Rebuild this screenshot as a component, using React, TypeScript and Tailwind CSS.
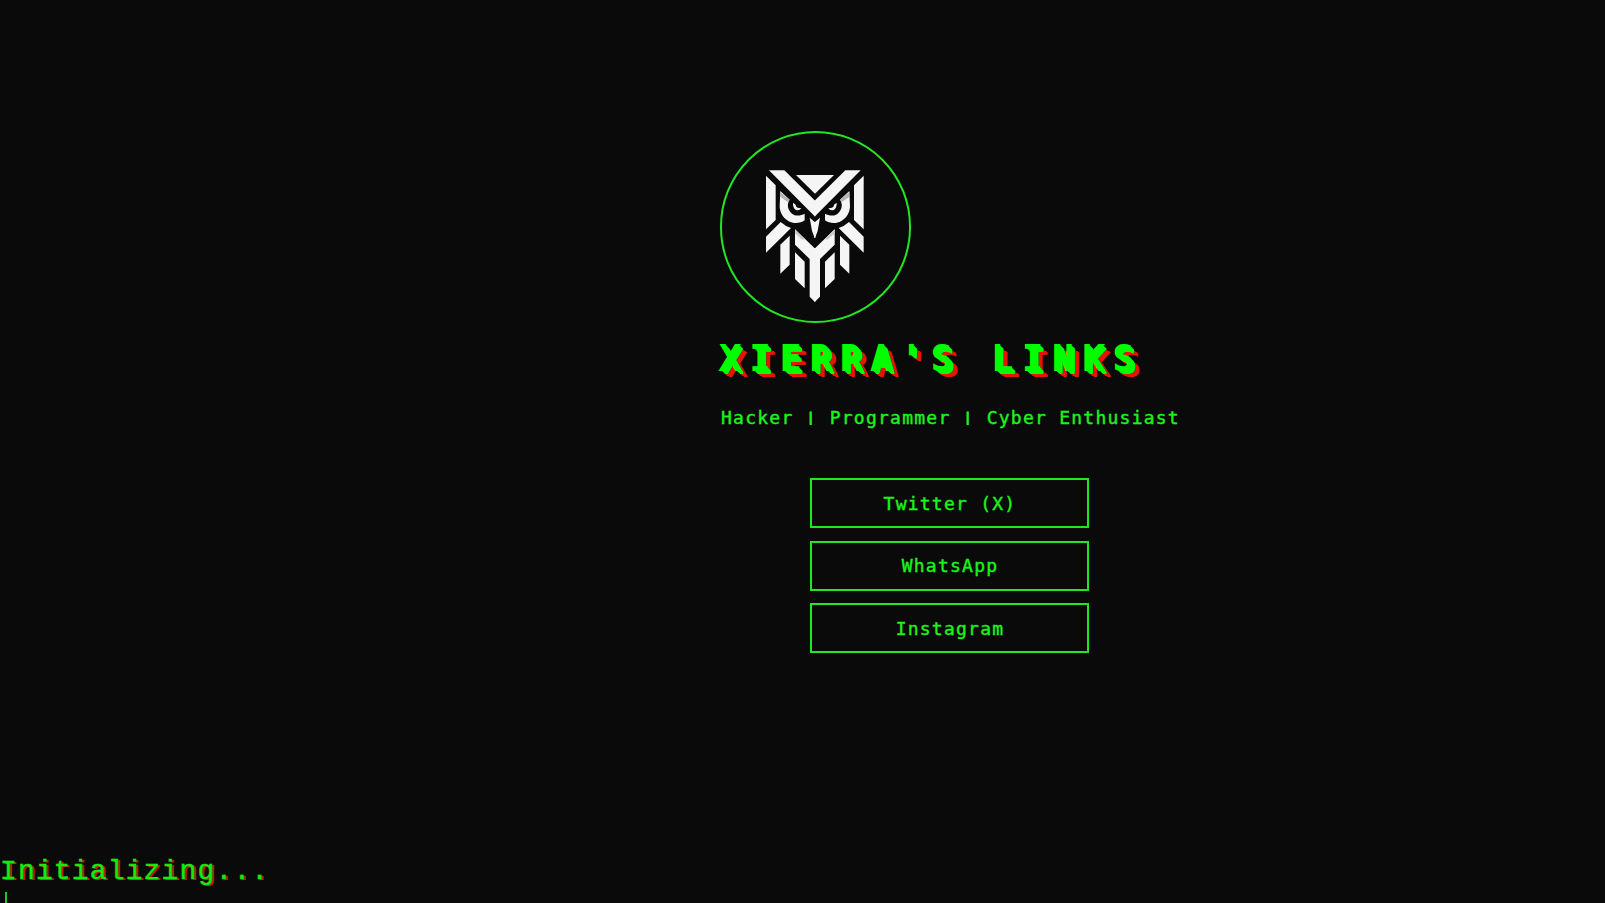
const links = ["Twitter (X)", "WhatsApp", "Instagram"];

function Owl() {
  const side = (
    <g>
      <path d="M177 151H223L316 243V289L314 289Z" />
      <path d="M168 167L197 196V300L168 328Z" />
      <path d="M211 213L239 239C229 253 234 270 246 281C257 290 274 286 284 281V301C271 311 250 312 235 303C217 292 209 275 209 258Z" />
      <path d="M211 216L239 239L233 246L211 230Z" fill="#b5b5b5" />
      <path d="M249 248L257 254Q257 263 268 264L274 265Q268 273 258 270Q248 264 249 248Z" />
      <path d="M168 350L212 306Q225 318 243 324L168 398Z" />
      <path d="M211 374L239 347V434L211 461Z" />
      <path d="M255 328L314 385H316V545H314L299 530V417L255 374Z" />
      <path d="M255 328L284 357L276 359L255 340Z" fill="#c9c9c9" />
      <path d="M255 397L284 425V505L255 477Z" />
      <path d="M299 293L314 306H316V354H314L306 333Z" />
    </g>
  );
  return (
    <svg viewBox="36 39 561 564" className="h-full w-full" fill="#f5f5f5">
      <path d="M258 165H372L315 221Z" />
      {side}
      <g transform="translate(629 0) scale(-1 1)">{side}</g>
    </svg>
  );
}

function Pipe() {
  return (
    <span className="inline-block w-[12.08px] pr-[2px] text-center align-[2px] text-[13px] leading-none tracking-normal [-webkit-text-stroke:1px_#1bf51b]">|</span>
  );
}

export default function App() {
  return (
    <div className="relative flex h-[903px] w-full justify-center overflow-hidden bg-[#0a0a0a] font-['DejaVu_Sans_Mono',monospace] text-[#1bf51b]">
      <main className="ml-[295px] flex w-[460px] flex-col pt-[131px]">
        <div className="h-[192px] w-[191px] rounded-full border-2 border-[#22e622]">
          <Owl />
        </div>
        <h1 className="mt-[12px] h-[48px] whitespace-nowrap text-[33px] leading-[48px] font-normal tracking-[10.4px] text-[#00ff00] [-webkit-text-stroke:2px_#00ff00] [text-shadow:1px_1px_0_#00ff00,2px_1px_0_#00ff00,2px_2px_0_#00ff00,3px_2px_0_#00ff00,3px_3px_0_#00ff00,4px_3px_0_#00ff00,4px_4px_0_#00ff00,5px_5px_0_#e61400,6px_6px_0_#e61400,7px_6px_0_#e61400,8px_7px_0_#e61400]">
          XIERRA'S LINKS
        </h1>
        <p className="mt-[21px] h-[28px] whitespace-nowrap pl-px text-[18px] leading-[28px] tracking-[1.24px] [-webkit-text-stroke:0.4px_#1bf51b]">
          Hacker <Pipe /> Programmer <Pipe /> Cyber Enthusiast
        </p>
        <nav className="mt-[46px] mr-[2px] flex flex-col items-center gap-[12.5px]">
          {links.map((label) => (
            <a
              key={label}
              href="#"
              className="flex h-[50px] w-[279px] items-center justify-center border-2 border-[#22e622] pl-[2px] text-[18px] tracking-[1.24px] [-webkit-text-stroke:0.4px_#1bf51b]"
            >
              {label}
            </a>
          ))}
        </nav>
      </main>
      <div className="absolute top-[855px] left-0 font-['Liberation_Mono',monospace] text-[28px] leading-[34px] tracking-[1.15px] text-[#10ed10] [-webkit-text-stroke:0.4px_#10ed10] [text-shadow:2px_1px_0_#c81e00]">
        Initializing...
      </div>
      <span className="absolute top-[892px] left-[5px] h-[11px] w-[2px] bg-[#22c822]" />
    </div>
  );
}
